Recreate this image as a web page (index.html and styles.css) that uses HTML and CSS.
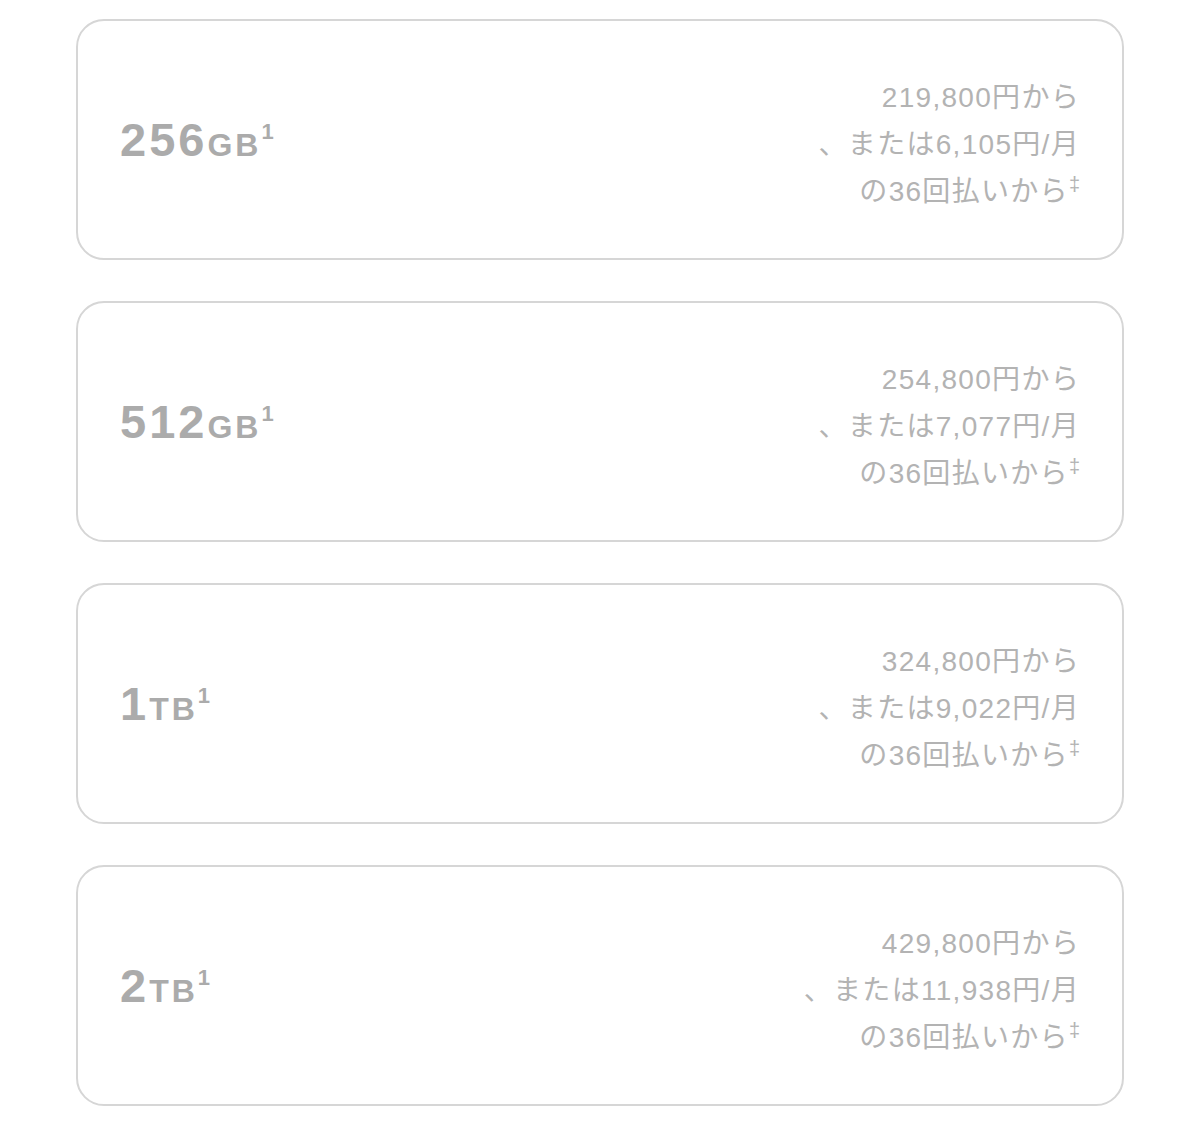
FILE: index.html
```html
<!DOCTYPE html>
<html lang="ja">
<head>
  <meta charset="UTF-8" />
  <meta name="viewport" content="width=device-width, initial-scale=1.0"/>
  <title>ストレージ容量</title>
  <link rel="stylesheet" href="styles.css">
</head>
<body>

  <div class="storage-list">
    <div class="storage-card">
      <div class="capacity">256<span class="unit">GB</span><sup>1</sup></div>
      <div class="price">219,800円から<br>、または6,105円/月<br>の36回払いから<sup>‡</sup></div>
    </div>

    <div class="storage-card">
      <div class="capacity">512<span class="unit">GB</span><sup>1</sup></div>
      <div class="price">254,800円から<br>、または7,077円/月<br>の36回払いから<sup>‡</sup></div>
    </div>

    <div class="storage-card">
      <div class="capacity">1<span class="unit">TB</span><sup>1</sup></div>
      <div class="price">324,800円から<br>、または9,022円/月<br>の36回払いから<sup>‡</sup></div>
    </div>

    <div class="storage-card">
      <div class="capacity">2<span class="unit">TB</span><sup>1</sup></div>
      <div class="price">429,800円から<br>、または11,938円/月<br>の36回払いから<sup>‡</sup></div>
    </div>
  </div>

</body>
</html>
```

FILE: styles.css
```css
body {
  margin: 0;
  background-color: #fff;
  font-family: "Liberation Sans", "Noto Sans CJK JP", sans-serif;
}

.storage-list {
  display: flex;
  flex-direction: column;
  gap: 41px;
  padding: 19px 76px;
}

.storage-card {
  box-sizing: border-box;
  height: 241px;
  border: 2px solid #d6d6d6;
  border-radius: 28px;
  padding: 0 42px;
  display: flex;
  align-items: center;
  justify-content: space-between;
}

.capacity {
  color: #ababab;
  font-size: 47px;
  font-weight: bold;
  line-height: 1;
  letter-spacing: 3px;
}

.capacity .unit {
  font-size: 32px;
  letter-spacing: 3px;
}

.capacity sup {
  font-size: 22px;
  vertical-align: 17px;
  letter-spacing: 0;
}

.price {
  color: #b3b3b3;
  font-size: 28px;
  line-height: 47px;
  letter-spacing: 1.3px;
  text-align: right;
  padding-top: 10px;
}

.price sup {
  font-size: 20px;
  vertical-align: 10px;
  line-height: 0;
  letter-spacing: 0;
}
```
